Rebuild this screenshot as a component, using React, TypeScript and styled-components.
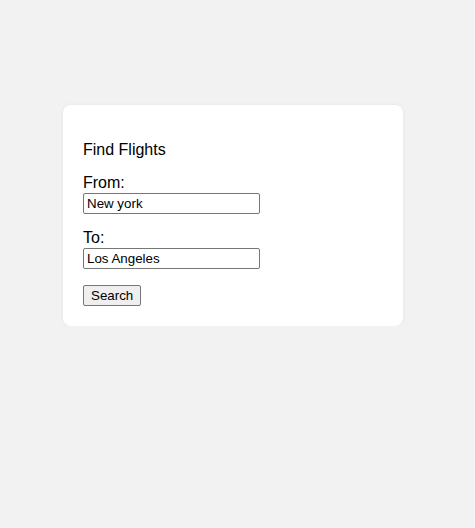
import React from "react";
import styled, { createGlobalStyle } from "styled-components";

const Global = createGlobalStyle`
  html, body { margin: 0; padding: 0; background: #f2f2f2; }
  body { font-family: "Liberation Sans", Arial, sans-serif; color: #000; }
`;

const Card = styled.div`
  box-sizing: border-box;
  margin: 105px 0 0 63px;
  width: 340px;
  padding: 20px;
  background: #fff;
  border-radius: 8px;
  box-shadow: 0 0 4px rgba(0, 0, 0, 0.06);
`;

const Title = styled.div`
  margin-top: 16px;
  font-size: 16px;
  line-height: 18px;
`;

const Field = styled.div<{ $gap: number }>`
  margin-top: ${(p) => p.$gap}px;
  display: flex;
  flex-direction: column;
  align-items: flex-start;
`;

const Label = styled.label`
  font-size: 16px;
  line-height: 18px;
  margin-bottom: 1px;
`;

const Input = styled.input`
  box-sizing: border-box;
  width: 177px;
  height: 21px;
  padding: 1px 3px;
  border: 1px solid #767676;
  border-radius: 2px;
  font-family: "Liberation Sans", Arial, sans-serif;
  font-size: 13.33px;
  color: #000;
  outline: none;
`;

const Button = styled.button`
  box-sizing: border-box;
  margin-top: 16px;
  height: 21px;
  padding: 1px 7px;
  border: 1px solid #767676;
  border-radius: 2px;
  background: #efefef;
  font-family: "Liberation Sans", Arial, sans-serif;
  font-size: 13.33px;
  color: #000;
`;

export default function App() {
  return (
    <>
      <Global />
      <Card>
        <Title>Find Flights</Title>
        <Field $gap={15}>
          <Label>From:</Label>
          <Input defaultValue="New york" />
        </Field>
        <Field $gap={15}>
          <Label>To:</Label>
          <Input defaultValue="Los Angeles" />
        </Field>
        <Button>Search</Button>
      </Card>
    </>
  );
}
